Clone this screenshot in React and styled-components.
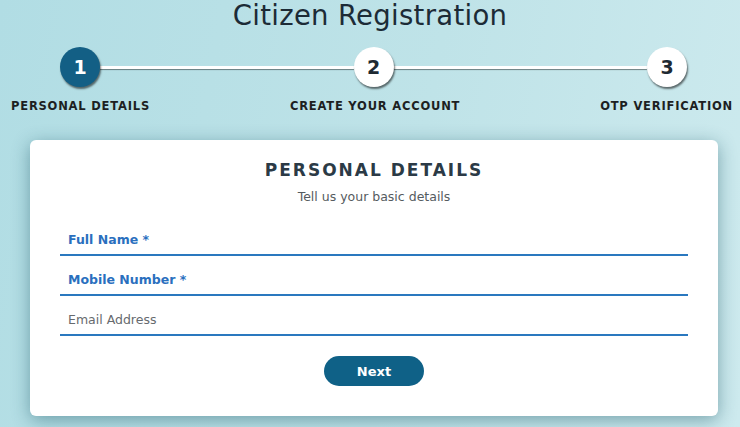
import React from 'react';
import styled, { createGlobalStyle } from 'styled-components';

const GlobalStyle = createGlobalStyle`
  html, body {
    margin: 0;
    padding: 0;
  }
  body {
    font-family: "DejaVu Sans", "Open Sans", sans-serif;
    background: linear-gradient(100deg, #b1dde4 0%, #bfe3e8 55%, #cdeaee 100%);
    min-height: 100vh;
    overflow: hidden;
  }
`;

const Page = styled.div`
  width: 740px;
  height: 427px;
  display: flex;
  flex-direction: column;
  align-items: stretch;
`;

const Title = styled.h1`
  margin: 0;
  height: 40px;
  line-height: 30px;
  text-align: center;
  font-size: 27.5px;
  font-weight: 400;
  color: #1c2b36;
  letter-spacing: 0.3px;
`;

const Track = styled.div`
  display: flex;
  align-items: center;
  padding: 7px 53px 0 60px;
`;

const Circle = styled.div`
  width: 40px;
  height: 40px;
  border-radius: 50%;
  flex: none;
  display: flex;
  align-items: center;
  justify-content: center;
  font-size: 19px;
  font-weight: 700;
  background: ${p => (p.$active ? '#135f85' : '#ffffff')};
  color: ${p => (p.$active ? '#ffffff' : '#1e2a33')};
  box-shadow: 1px 2px 2px rgba(0, 0, 0, 0.55);
  position: relative;
  z-index: 1;
`;

const Line = styled.div`
  flex: 1;
  height: 3px;
  background: #ffffff;
  box-shadow: 0 1px 1px rgba(0, 0, 0, 0.45);
`;

const Labels = styled.div`
  display: flex;
  justify-content: space-between;
  padding: 12px 7px 0 11px;
`;

const StepLabel = styled.span`
  font-size: 11.5px;
  font-weight: 700;
  letter-spacing: 0.8px;
  color: #1d1f22;
  white-space: nowrap;
`;

const Card = styled.div`
  margin: 27px 22px 0 30px;
  height: 276px;
  box-sizing: border-box;
  background: #ffffff;
  border-radius: 6px;
  box-shadow: 0 4px 18px rgba(20, 80, 95, 0.45);
  padding: 20px 30px 0 30px;
  display: flex;
  flex-direction: column;
  align-items: stretch;
`;

const CardTitle = styled.h2`
  margin: 0;
  text-align: center;
  font-size: 17px;
  font-weight: 700;
  letter-spacing: 2px;
  color: #2b3a46;
  line-height: 20px;
`;

const CardSub = styled.p`
  margin: 9px 0 11px;
  text-align: center;
  font-size: 12.5px;
  color: #555b60;
  line-height: 16px;
`;

const Field = styled.div`
  height: 38px;
  margin-top: 2px;
  box-sizing: border-box;
  border-bottom: 2px solid #2a78bf;
  display: flex;
  align-items: flex-end;
  padding: 0 0 7px 8px;
`;

const FieldLabel = styled.span`
  font-size: 12.5px;
  font-weight: ${p => (p.$required ? 700 : 400)};
  color: ${p => (p.$required ? '#2a6fbe' : '#666a6e')};
`;

const Actions = styled.div`
  display: flex;
  justify-content: center;
  margin-top: 20px;
`;

const NextButton = styled.button`
  width: 100px;
  height: 30px;
  border: none;
  border-radius: 15px;
  background: #0f6187;
  color: #ffffff;
  font-family: inherit;
  font-size: 13px;
  font-weight: 700;
  cursor: pointer;
`;

const steps = ['PERSONAL DETAILS', 'CREATE YOUR ACCOUNT', 'OTP VERIFICATION'];

const fields = [
  { label: 'Full Name *', required: true },
  { label: 'Mobile Number *', required: true },
  { label: 'Email Address', required: false },
];

function App() {
  return (
    <Page>
      <GlobalStyle />
      <Title>Citizen Registration</Title>
      <Track>
        <Circle $active>1</Circle>
        <Line />
        <Circle>2</Circle>
        <Line />
        <Circle>3</Circle>
      </Track>
      <Labels>
        {steps.map(s => (
          <StepLabel key={s}>{s}</StepLabel>
        ))}
      </Labels>
      <Card>
        <CardTitle>PERSONAL DETAILS</CardTitle>
        <CardSub>Tell us your basic details</CardSub>
        {fields.map(f => (
          <Field key={f.label}>
            <FieldLabel $required={f.required}>{f.label}</FieldLabel>
          </Field>
        ))}
        <Actions>
          <NextButton>Next</NextButton>
        </Actions>
      </Card>
    </Page>
  );
}

export default App;
